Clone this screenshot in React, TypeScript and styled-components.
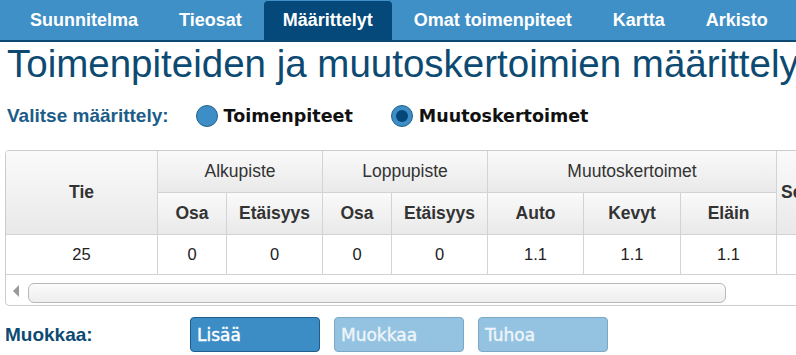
import React from "react";
import styled, { createGlobalStyle } from "styled-components";

const GlobalStyle = createGlobalStyle`
  html, body {
    margin: 0;
    padding: 0;
    overflow: hidden;
    background: #ffffff;
    font-family: "Liberation Sans", Arial, sans-serif;
  }
`;

const Page = styled.div`
  width: 1000px;
`;

const Nav = styled.nav`
  display: flex;
  align-items: flex-end;
  gap: 3px;
  height: 40px;
  padding-left: 11px;
  background: #3f90c6;
  border-bottom: 2px solid #0d4a72;
`;

const Tab = styled.a<{ $active?: boolean }>`
  display: flex;
  align-items: center;
  height: 39px;
  padding: 0 19px;
  border-radius: 4px 4px 0 0;
  background: ${(p) => (p.$active ? "#04497a" : "transparent")};
  color: #ffffff;
  font-size: 18px;
  font-weight: bold;
  text-decoration: none;
  white-space: nowrap;
`;

const Title = styled.h1`
  margin: 0 0 0 7px;
  font-size: 38.5px;
  line-height: 44px;
  font-weight: normal;
  color: #0d4a72;
  white-space: nowrap;
`;

const ChooserRow = styled.div`
  display: flex;
  align-items: center;
  height: 22px;
  margin-top: 19px;
  padding-left: 7px;
`;

const ChooserLabel = styled.span`
  margin-right: 27px;
  font-size: 19px;
  font-weight: bold;
  color: #1b5c89;
`;

const RadioOption = styled.label`
  display: flex;
  align-items: center;
  gap: 6px;
  margin-right: 38px;
`;

const RadioDot = styled.span<{ $checked?: boolean }>`
  position: relative;
  box-sizing: border-box;
  width: 22px;
  height: 22px;
  border-radius: 50%;
  background: #3d8ec6;
  border: 1px solid #21618f;
  &::after {
    content: "";
    display: ${(p) => (p.$checked ? "block" : "none")};
    position: absolute;
    left: 4px;
    top: 4px;
    width: 12px;
    height: 12px;
    border-radius: 50%;
    background: #054877;
  }
`;

const RadioText = styled.span`
  font-family: "DejaVu Sans", Verdana, sans-serif;
  font-size: 17.5px;
  font-weight: bold;
  color: #111111;
`;

const TableFrame = styled.div`
  width: 860px;
  margin: 23px 0 0 5px;
  border: 1px solid #cccccc;
  border-radius: 4px;
  overflow: hidden;
`;

const Grid = styled.table`
  border-collapse: separate;
  border-spacing: 0;
  table-layout: fixed;
  width: 825px;
`;

const HeadCell = styled.th<{ $group?: boolean; $h?: number }>`
  box-sizing: border-box;
  height: ${(p) => p.$h ?? 42}px;
  padding: 0 4px;
  border-right: 1px solid #d3d3d3;
  border-bottom: 1px solid #d3d3d3;
  background: linear-gradient(#fafafa, #e9e9e9);
  color: #333333;
  font-size: 17.5px;
  font-weight: ${(p) => (p.$group ? "normal" : "bold")};
  text-align: center;
  white-space: nowrap;
`;

const DataCell = styled.td`
  box-sizing: border-box;
  height: 40px;
  padding: 0 4px;
  border-right: 1px solid #d3d3d3;
  border-bottom: 1px solid #d3d3d3;
  color: #222222;
  font-size: 16.5px;
  text-align: center;
`;

const ScrollBar = styled.div`
  display: flex;
  align-items: flex-start;
  height: 30px;
  padding: 8px 0 0 7px;
  box-sizing: border-box;
`;

const ScrollArrow = styled.span`
  width: 0;
  height: 0;
  margin-top: 2px;
  border-top: 6px solid transparent;
  border-bottom: 6px solid transparent;
  border-right: 6px solid #9a9a9a;
`;

const ScrollThumb = styled.div`
  box-sizing: border-box;
  width: 698px;
  height: 20px;
  margin-left: 9px;
  border: 1px solid #b8b8b8;
  border-radius: 6px;
  background: linear-gradient(#fbfbfb, #ededed);
`;

const EditRow = styled.div`
  display: flex;
  align-items: center;
  gap: 14px;
  margin-top: 11px;
  padding-left: 5px;
`;

const EditLabel = styled.span`
  width: 171px;
  font-size: 19px;
  font-weight: bold;
  color: #0d4a72;
`;

const ActionButton = styled.button<{ $disabled?: boolean }>`
  box-sizing: border-box;
  width: 130px;
  height: 35px;
  padding: 0 0 0 6px;
  border-radius: 4px;
  border: 1px solid ${(p) => (p.$disabled ? "#7ca8c6" : "#1d5e8c")};
  background: ${(p) => (p.$disabled ? "#93c3e0" : "#3c8dc5")};
  color: ${(p) => (p.$disabled ? "#eef5fa" : "#ffffff")};
  font-family: "DejaVu Sans", Verdana, sans-serif;
  font-size: 17px;
  -webkit-text-stroke: 0.4px currentColor;
  text-align: left;
`;

const tabs = ["Suunnitelma", "Tieosat", "Määrittelyt", "Omat toimenpiteet", "Kartta", "Arkisto"];
const colWidths = [152, 69, 96, 69, 96, 96, 97, 96, 54];
const row = ["25", "0", "0", "0", "0", "1.1", "1.1", "1.1", ""];

export default function App() {
  return (
    <Page>
      <GlobalStyle />
      <Nav>
        {tabs.map((t) => (
          <Tab key={t} $active={t === "Määrittelyt"}>
            {t}
          </Tab>
        ))}
      </Nav>
      <Title>Toimenpiteiden ja muutoskertoimien määrittely</Title>
      <ChooserRow>
        <ChooserLabel>Valitse määrittely:</ChooserLabel>
        <RadioOption>
          <RadioDot />
          <RadioText>Toimenpiteet</RadioText>
        </RadioOption>
        <RadioOption>
          <RadioDot $checked />
          <RadioText>Muutoskertoimet</RadioText>
        </RadioOption>
      </ChooserRow>
      <TableFrame>
        <Grid>
          <colgroup>
            {colWidths.map((w, i) => (
              <col key={i} style={{ width: w }} />
            ))}
          </colgroup>
          <thead>
            <tr>
              <HeadCell rowSpan={2} $h={84}>Tie</HeadCell>
              <HeadCell colSpan={2} $group>Alkupiste</HeadCell>
              <HeadCell colSpan={2} $group>Loppupiste</HeadCell>
              <HeadCell colSpan={3} $group>Muutoskertoimet</HeadCell>
              <HeadCell rowSpan={2} $h={84}>Selite</HeadCell>
            </tr>
            <tr>
              <HeadCell>Osa</HeadCell>
              <HeadCell>Etäisyys</HeadCell>
              <HeadCell>Osa</HeadCell>
              <HeadCell>Etäisyys</HeadCell>
              <HeadCell>Auto</HeadCell>
              <HeadCell>Kevyt</HeadCell>
              <HeadCell>Eläin</HeadCell>
            </tr>
          </thead>
          <tbody>
            <tr>
              {row.map((v, i) => (
                <DataCell key={i}>{v}</DataCell>
              ))}
            </tr>
          </tbody>
        </Grid>
        <ScrollBar>
          <ScrollArrow />
          <ScrollThumb />
        </ScrollBar>
      </TableFrame>
      <EditRow>
        <EditLabel>Muokkaa:</EditLabel>
        <ActionButton>Lisää</ActionButton>
        <ActionButton $disabled>Muokkaa</ActionButton>
        <ActionButton $disabled>Tuhoa</ActionButton>
      </EditRow>
    </Page>
  );
}
